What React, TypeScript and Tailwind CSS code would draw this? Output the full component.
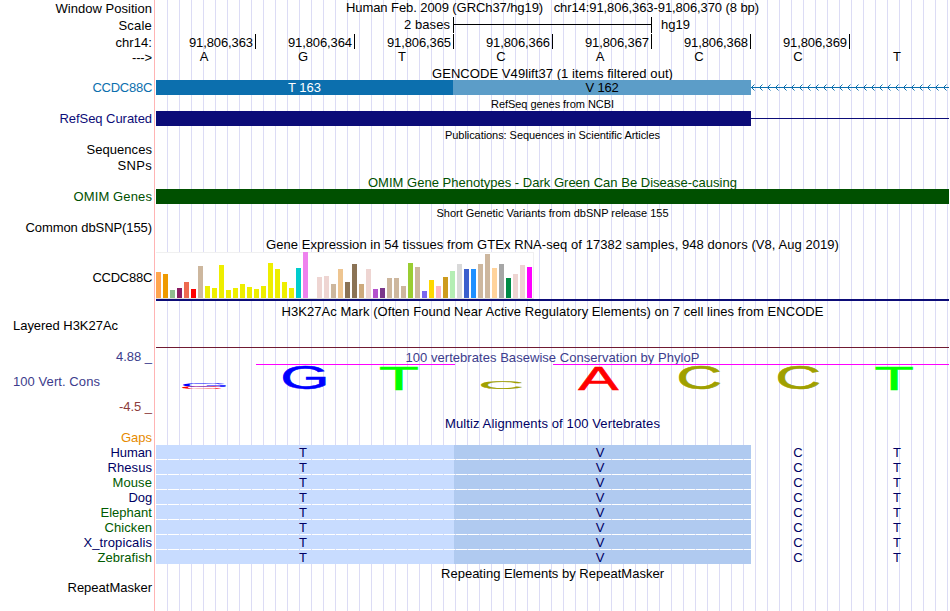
import { useLayoutEffect, useRef, useState } from "react";
import type { CSSProperties } from "react";

/** Text that is tracked so that it spans exactly `width` pixels. */
function Fit({ children, width, className = "" }: { children: string; width: number; className?: string }) {
  const ref = useRef<HTMLSpanElement>(null);
  const [style, setStyle] = useState<CSSProperties>({});
  useLayoutEffect(() => {
    if (!ref.current) return;
    const natural = ref.current.getBoundingClientRect().width;
    const step = (width - natural) / children.length;
    setStyle({ letterSpacing: `${step}px` });
  }, []);
  return (
    <span ref={ref} style={style} className={`inline-block whitespace-pre ${className}`}>
      {children}
    </span>
  );
}

const labels = [
  { text: "Window Position", width: 96.5, cls: "mt-px" },
  { text: "Scale", width: 33.5, cls: "mt-0.5" },
  { text: "chr14:", width: 36.5, cls: "mt-0.5" },
  { text: "--->", width: 20, cls: "" },
  { text: "CCDC88C", width: 59.5, cls: "mt-[15px] text-[#0c6fae]" },
  { text: "RefSeq Curated", width: 92.5, cls: "mt-4 text-[#0c0c78]" },
  { text: "Sequences", width: 65.5, cls: "mt-4" },
  { text: "SNPs", width: 34.5, cls: "mt-px" },
  { text: "OMIM Genes", width: 78.5, cls: "mt-4 text-[#005000]" },
  { text: "Common dbSNP(155)", width: 126.5, cls: "mt-4" },
  { text: "CCDC88C", width: 59.5, cls: "mt-[35px]" },
];

const species = [
  { text: "Human", width: 41.5, cls: "text-[#000064]" },
  { text: "Rhesus", width: 44.5, cls: "text-[#000064]" },
  { text: "Mouse", width: 39.5, cls: "text-[#005a00]" },
  { text: "Dog", width: 23.5, cls: "text-[#000064]" },
  { text: "Elephant", width: 51.5, cls: "text-[#005a00]" },
  { text: "Chicken", width: 47.5, cls: "text-[#005a00]" },
  { text: "X_tropicalis", width: 68.5, cls: "text-[#000064]" },
  { text: "Zebrafish", width: 54.5, cls: "text-[#005a00]" },
];

const Y = "#eeee00";
const TAN = "#cdb79e";
const ROSE = "#eed5d2";
const tissues: [number, string][] = [
  [26, "#ffa54f"], [24, "#ee9a00"], [8, "#8fbc8f"], [10, "#8b1c62"], [16, "#ee6a50"], [9, "#ff0000"], [32, TAN],
  [12, Y], [10, Y], [33, Y], [8, Y], [10, Y], [14, Y], [11, Y], [9, Y], [12, Y], [35, Y], [29, Y], [16, Y], [10, Y],
  [30, "#00cdcd"], [46, "#ee82ee"], [0, ROSE], [21, ROSE], [22, ROSE], [14, TAN], [29, "#eec591"], [16, "#8b7355"],
  [34, "#8b7355"], [14, "#cdaa7d"], [29, ROSE], [9, "#b452cd"], [10, "#7a378b"], [20, TAN], [20, TAN], [12, TAN],
  [35, "#9acd32"], [31, TAN], [7, "#7a67ee"], [18, "#ffd700"], [12, "#ffb6c1"], [21, "#cd9b1d"], [27, "#b4eeb4"],
  [34, "#d9d9d9"], [29, "#3a5fcd"], [29, "#1e90ff"], [34, TAN], [44, TAN], [30, "#ffd39b"], [34, "#a6a6a6"],
  [20, "#008b45"], [24, ROSE], [33, ROSE], [31, "#ff00ff"],
];

// Ink extents of the logo capitals, in ems: left, right, bottom, top.
const ink: Record<string, [number, number, number, number]> = {
  A: [0.002, 0.665, 0, 0.688],
  C: [0.05, 0.679, -0.01, 0.698],
  G: [0.05, 0.711, -0.01, 0.698],
  T: [0.022, 0.588, 0, 0.688],
};

type LogoProps = { c: string; x0: number; x1: number; y0: number; y1: number; fill: string; weight?: number };

function LogoLetter({ c, x0, x1, y0, y1, fill, weight = 1.6 }: LogoProps) {
  const [l, r, b, t] = ink[c];
  const sx = (x1 - x0) / ((r - l) * 100 + weight);
  const sy = (y1 - y0) / ((t - b) * 100 + weight);
  const dx = x0 - (l * 100 - weight / 2) * sx;
  const dy = y1 + (b * 100 - weight / 2) * sy;
  return (
    <text transform={`translate(${dx} ${dy}) scale(${sx} ${sy})`} fontSize="100" fill={fill} stroke={fill} strokeWidth={weight}>
      {c}
    </text>
  );
}

function Labels() {
  return (
    <div className="flex w-[152px] shrink-0 flex-col items-end leading-[15px]">
      {labels.map((l, i) => (
        <Fit key={i} width={l.width} className={l.cls}>{l.text}</Fit>
      ))}
      <div className="mt-[33px] w-full pl-[13px]"><Fit width={105}>Layered H3K27Ac</Fit></div>
      <div className="mt-4 text-[#3c3c8c]"><Fit width={36}>4.88 _</Fit></div>
      <div className="mt-2.5 w-full pl-[13px] text-[#3c3c8c]"><Fit width={87}>100 Vert. Cons</Fit></div>
      <div className="mt-2.5 text-[#8c3c3c]"><Fit width={33}>-4.5 _</Fit></div>
      <Fit width={31} className="mt-4 text-[#e68a00]">Gaps</Fit>
      {species.map((s) => (
        <Fit key={s.text} width={s.width} className={s.cls}>{s.text}</Fit>
      ))}
      <Fit width={84.5} className="mt-[15px]">RepeatMasker</Fit>
    </div>
  );
}

export default function App() {
  return (
    <div
      className="flex h-[611px] w-[950px] overflow-hidden bg-white text-[13px] text-black"
      style={{ fontFamily: '"Liberation Sans", Arial, sans-serif' }}
    >
      <Labels />
      <div className="ml-0.5 w-px shrink-0 bg-[#ffb4b4]" />
      <Plot />
    </div>
  );
}

function Title({ children, width, className }: { children: string; width: number; className: string }) {
  return (
    <div className={`flex h-[15px] shrink-0 justify-center pl-px leading-[15px] ${className}`}>
      <Fit width={width}>{children}</Fit>
    </div>
  );
}

function SmallTitle({ children, width, className }: { children: string; width: number; className: string }) {
  return (
    <div className={`flex h-3 shrink-0 justify-center pl-px text-[11px] leading-[12px] ${className}`}>
      <Fit width={width}>{children}</Fit>
    </div>
  );
}

function Plot() {
  return (
    <main className="flex h-full w-[794px] flex-col bg-[linear-gradient(to_right,#fff_1px,transparent_1px),repeating-linear-gradient(to_right,#dcdcf5_0px,#dcdcf5_1px,transparent_1px,transparent_12px)]">
      <div className="flex h-[15px] shrink-0 pl-[191px] leading-[15px]">
        <Fit width={413}>{"Human Feb. 2009 (GRCh37/hg19)   chr14:91,806,363-91,806,370 (8 bp)"}</Fit>
      </div>

      <div className="mt-0.5 flex h-4 shrink-0 leading-[15px]">
        <div className="w-[298px] pr-[3px] text-right"><Fit width={46}>2 bases</Fit></div>
        <div className="w-[199px] border-x border-black"><div className="mt-[7px] h-px bg-black" /></div>
        <div className="pl-[9px]"><Fit width={29}>hg19</Fit></div>
      </div>

      <div className="mt-px flex h-[15px] shrink-0 pl-0.5">
        {[363, 364, 365, 366, 367, 368, 369].map((n) => (
          <div key={n} className="w-[99px] border-r border-black pr-0.5 pt-px text-right leading-[15px]">
            <Fit width={64}>{`91,806,${n}`}</Fit>
          </div>
        ))}
      </div>

      <div className="-ml-[0.5px] grid h-[15px] shrink-0 grid-cols-[repeat(8,99px)] text-center leading-[15px]">
        {"AGTCACCT".split("").map((c, i) => <span key={i}>{c}</span>)}
      </div>

      <Title width={241} className="mt-0.5">GENCODE V49lift37 (1 items filtered out)</Title>
      <div className="relative -mt-px ml-px flex h-[15px] shrink-0 text-center leading-[15px]">
        <div className="w-[297px] bg-[#0c6fae] text-white"><Fit width={33}>T 163</Fit></div>
        <div className="w-[298px] bg-[#5c9dc8]"><Fit width={33}>V 162</Fit></div>
        <svg width="198" height="15" shapeRendering="crispEdges" fill="none" stroke="#0c6fae">
          <path d="M0 7.5H198" />
          {Array.from({ length: 25 }, (_, i) => (
            <path key={i} d={`M${i * 8 + 3.5} 4.5l-3 3l3 3`} shapeRendering="auto" />
          ))}
        </svg>
      </div>

      <SmallTitle width={123} className="mt-[3px]">RefSeq genes from NCBI</SmallTitle>
      <div className="ml-px mt-px flex h-[15px] shrink-0 items-center">
        <div className="h-full w-[595px] bg-[#0c0c78]" />
        <div className="h-px flex-1 bg-[#0c0c78]" />
      </div>

      <SmallTitle width={215} className="mt-[3px]">Publications: Sequences in Scientific Articles</SmallTitle>
      <Title width={369} className="mt-[34px] text-[#005000]">OMIM Gene Phenotypes - Dark Green Can Be Disease-causing</Title>
      <div className="relative -mt-px ml-px h-[15px] shrink-0 bg-[#005000]" />

      <SmallTitle width={232} className="mt-[3px]">Short Genetic Variants from dbSNP release 155</SmallTitle>
      <Title width={573} className="mt-[18px]">Gene Expression in 54 tissues from GTEx RNA-seq of 17382 samples, 948 donors (V8, Aug 2019)</Title>
      <div className="ml-px flex h-[47px] w-[378px] shrink-0 items-end gap-0.5 border-b border-r border-t border-[#f0f0f0] border-b-[#dcdcdc] bg-white">
        {tissues.map(([h, color], i) => (
          <div key={i} className="-mt-px w-[5px] shrink-0" style={{ height: h, backgroundColor: color }} />
        ))}
      </div>
      <div className="ml-px h-0.5 shrink-0 bg-[#0c0c78]" />

      <Title width={542} className="mt-[3px]">H3K27Ac Mark (Often Found Near Active Regulatory Elements) on 7 cell lines from ENCODE</Title>
      <div className="ml-px mt-7 h-px shrink-0 bg-[#701a32]" />

      <Title width={294} className="mt-0.5 text-[#3c3c8c]">100 vertebrates Basewise Conservation by PhyloP</Title>
      <svg width="794" height="52" viewBox="155 364 794 52" className="-mt-px shrink-0 overflow-visible">
        <path d="M256 364.5H455M553 364.5H949" stroke="#ff00ff" />
        <LogoLetter c="G" x0={183} x1={226} y0={384} y1={387.2} fill="#0000ff" weight={0} />
        <LogoLetter c="C" x0={182} x1={221} y0={387} y1={389} fill="#ff0000" weight={0} />
        <LogoLetter c="G" x0={283} x1={326} y0={366} y1={390} fill="#0000ff" />
        <LogoLetter c="T" x0={380} x1={418} y0={366} y1={390} fill="#00ff00" />
        <LogoLetter c="C" x0={481} x1={522} y0={381} y1={389} fill="#a0a000" />
        <LogoLetter c="A" x0={578} x1={619} y0={366} y1={390} fill="#ff0000" />
        <LogoLetter c="C" x0={679} x1={720} y0={366} y1={390} fill="#a0a000" />
        <LogoLetter c="C" x0={778} x1={819} y0={366} y1={390} fill="#a0a000" />
        <LogoLetter c="T" x0={875.5} x1={913} y0={366} y1={390} fill="#00ff00" />
      </svg>

      <Title width={215} className="text-[#000064]">Multiz Alignments of 100 Vertebrates</Title>
      <div className="ml-px mt-[14px] flex shrink-0 flex-col gap-px text-[#000064]">
        {species.map((s) => (
          <div key={s.text} className="h-[14px] bg-[linear-gradient(to_right,#c8dcff_298px,#b0caf0_298px,#b0caf0_595px,transparent_595px)]">
            <div className="-ml-[1.5px] grid grid-cols-[repeat(8,99px)] text-center leading-[15px]">
              <span className="col-start-2">T</span>
              <span className="col-start-5">V</span>
              <span className="col-start-7">C</span>
              <span className="col-start-8">T</span>
            </div>
          </div>
        ))}
      </div>

      <Title width={223} className="mt-0.5">Repeating Elements by RepeatMasker</Title>
    </main>
  );
}
